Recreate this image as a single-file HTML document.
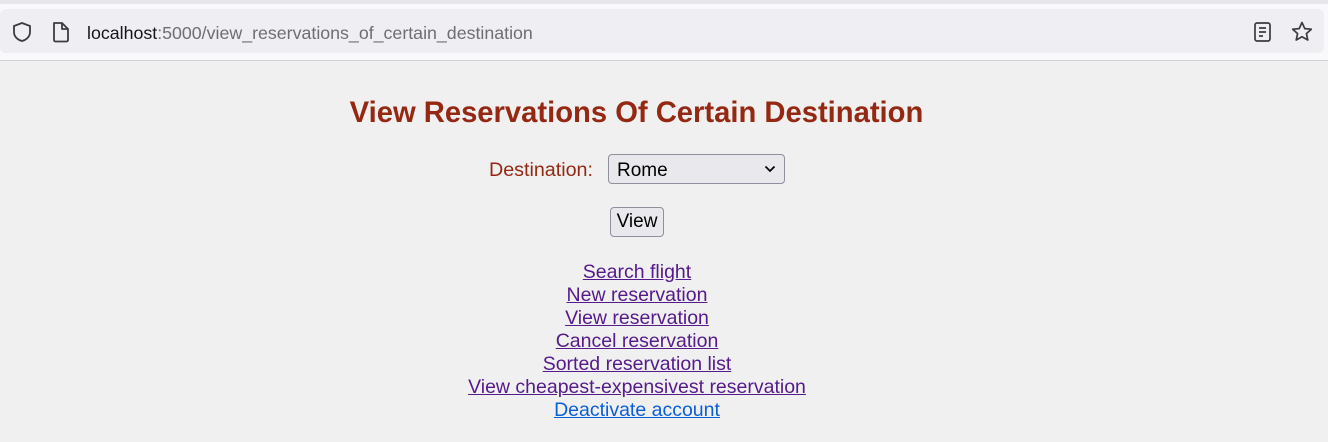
<!DOCTYPE html>
<html><head><style>
body{margin:0;width:1328px;height:442px;background:#f0f0f0;font-family:"Liberation Sans",Arial,sans-serif;overflow:hidden;position:relative}
.top{position:absolute;left:0;top:0;width:1328px;height:4px;background:#e6e6eb}
.bar{position:absolute;left:0;top:4px;width:1328px;height:56px;background:#f9f9fb;border-bottom:1px solid #cfcfd4}
.url{position:absolute;left:0;top:5px;width:1324px;height:44px;background:#efeff3;border-radius:6px}
.urltext{position:absolute;left:87px;top:22px;font-size:17.8px;color:#6e6e72;line-height:22px}
.urltext b{font-weight:normal;color:#15141a}
h1{position:absolute;left:0;width:1273px;text-align:center;top:97px;margin:0;font-size:29.2px;color:#952812;font-weight:bold}
.lab{position:absolute;left:489px;top:159px;font-size:19.7px;color:#952812}
.sel{position:absolute;left:608px;top:154px;width:177px;height:30px;border:1px solid #8f8f9d;border-radius:4px;background:#e9e9ed;box-sizing:border-box}
.sel span{position:absolute;left:8px;top:5px;font-size:19px;color:#000}
.btn{position:absolute;left:610px;top:207px;width:54px;height:30px;border:1px solid #8f8f9d;border-radius:4px;background:#e9e9ed;box-sizing:border-box;font-size:19px;text-align:center;line-height:28px}
.links{position:absolute;left:0;width:1274px;top:261px;text-align:center;font-size:19.5px;line-height:23px}
.links a{color:#551a8b;text-decoration:underline}
.links a.b{color:#0b5fd6}
</style></head><body>
<div class="top"></div>
<div class="bar"><div class="url"></div></div>
<svg style="position:absolute;left:11px;top:21px" width="22" height="22" viewBox="0 0 22 22"><path d="M11 2 L19 5 V11 C19 16 15 19 11 20 C7 19 3 16 3 11 V5 Z" fill="none" stroke="#3b3b40" stroke-width="1.8"/></svg>
<svg style="position:absolute;left:51px;top:21px" width="20" height="22" viewBox="0 0 20 22"><path d="M3 2 H11 L17 8 V19 a1.5 1.5 0 0 1 -1.5 1.5 H4.5 A1.5 1.5 0 0 1 3 19 Z M11 2 V8 H17" fill="none" stroke="#3b3b40" stroke-width="1.8" stroke-linejoin="round"/></svg>
<div class="urltext"><b>localhost</b>:5000/view_reservations_of_certain_destination</div>
<svg style="position:absolute;left:1253px;top:21px" width="20" height="22" viewBox="0 0 20 22"><rect x="2" y="2" width="15" height="18" rx="2" fill="none" stroke="#3b3b40" stroke-width="1.7"/><path d="M6 7H13M6 11H13M6 15H10" stroke="#3b3b40" stroke-width="1.7"/></svg>
<svg style="position:absolute;left:1290px;top:20px" width="24" height="24" viewBox="0 0 24 24"><path d="M12 2.5 L14.8 8.6 L21.3 9.2 L16.4 13.6 L17.8 20 L12 16.7 L6.2 20 L7.6 13.6 L2.7 9.2 L9.2 8.6 Z" fill="none" stroke="#3b3b40" stroke-width="1.7" stroke-linejoin="round"/></svg>
<h1>View Reservations Of Certain Destination</h1>
<div class="lab">Destination:</div>
<div class="sel"><span>Rome</span><svg style="position:absolute;right:8px;top:10px" width="12" height="8" viewBox="0 0 12 8"><path d="M1.5 1.5 L6 6 L10.5 1.5" fill="none" stroke="#000" stroke-width="1.8"/></svg></div>
<div class="btn">View</div>
<div class="links">
<a>Search flight</a><br><a>New reservation</a><br><a>View reservation</a><br><a>Cancel reservation</a><br><a>Sorted reservation list</a><br><a>View cheapest-expensivest reservation</a><br><a class="b">Deactivate account</a>
</div>
</body></html>
